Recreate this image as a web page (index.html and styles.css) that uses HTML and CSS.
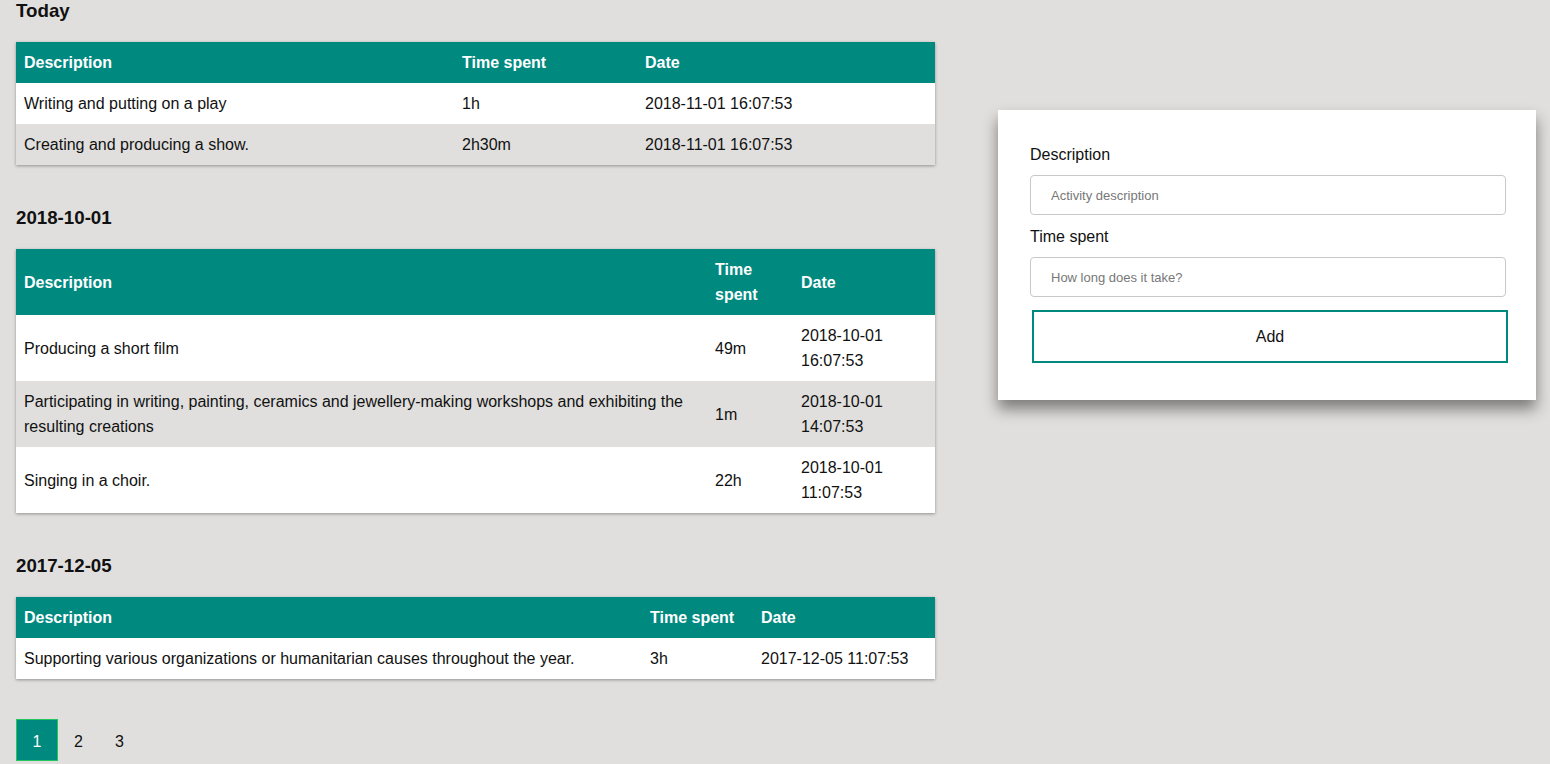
FILE: index.html
```html
<!DOCTYPE html>
<html lang="en">
<head>
<meta charset="utf-8">
<title>Activities</title>
<link rel="stylesheet" href="styles.css">
</head>
<body>
<div class="page">
  <main class="list">
    <section class="group">
      <h3 class="group-title">Today</h3>
      <table class="activities">
        <colgroup><col class="c-a1"><col class="c-b1"><col class="c-c1"></colgroup>
        <thead><tr><th>Description</th><th>Time spent</th><th>Date</th></tr></thead>
        <tbody>
          <tr><td>Writing and putting on a play</td><td>1h</td><td>2018-11-01 16:07:53</td></tr>
          <tr><td>Creating and producing a show.</td><td>2h30m</td><td>2018-11-01 16:07:53</td></tr>
        </tbody>
      </table>
    </section>
    <section class="group">
      <h3 class="group-title">2018-10-01</h3>
      <table class="activities">
        <colgroup><col class="c-a2"><col class="c-b2"><col class="c-c2"></colgroup>
        <thead><tr><th>Description</th><th>Time spent</th><th>Date</th></tr></thead>
        <tbody>
          <tr><td>Producing a short film</td><td>49m</td><td>2018-10-01 16:07:53</td></tr>
          <tr><td>Participating in writing, painting, ceramics and jewellery-making workshops and exhibiting the resulting creations</td><td>1m</td><td>2018-10-01 14:07:53</td></tr>
          <tr><td>Singing in a choir.</td><td>22h</td><td>2018-10-01 11:07:53</td></tr>
        </tbody>
      </table>
    </section>
    <section class="group">
      <h3 class="group-title">2017-12-05</h3>
      <table class="activities">
        <colgroup><col class="c-a3"><col class="c-b3"><col class="c-c3"></colgroup>
        <thead><tr><th>Description</th><th>Time spent</th><th>Date</th></tr></thead>
        <tbody>
          <tr><td>Supporting various organizations or humanitarian causes throughout the year.</td><td>3h</td><td>2017-12-05 11:07:53</td></tr>
        </tbody>
      </table>
    </section>
    <nav class="pager">
      <span class="page-item active">1</span>
      <span class="page-item">2</span>
      <span class="page-item">3</span>
    </nav>
  </main>
  <aside class="card">
    <form class="form">
      <label class="label" for="desc">Description</label>
      <input class="input" id="desc" type="text" placeholder="Activity description">
      <label class="label" for="time">Time spent</label>
      <input class="input" id="time" type="text" placeholder="How long does it take?">
      <button class="add-btn" type="button">Add</button>
    </form>
  </aside>
</div>
</body>
</html>
```

FILE: styles.css
```css
html, body {
  margin: 0;
  padding: 0;
  background: #e0dfdd;
  font-family: "Liberation Sans", Arial, sans-serif;
  color: #111;
}

.page {
  display: flex;
  align-items: flex-start;
  padding: 0 14px 0 16px;
}

.list {
  width: 919px;
  flex: 0 0 919px;
}

.group {
  margin-bottom: 42px;
}

.group-title {
  margin: 0 0 20px;
  font-size: 18.72px;
  line-height: 22px;
  font-weight: bold;
  color: #111;
}

.activities {
  width: 100%;
  table-layout: fixed;
  border-collapse: collapse;
  font-size: 16px;
  line-height: 25px;
  background: #fff;
  box-shadow: 0 1px 3px rgba(0, 0, 0, 0.35);
}

.c-a1 { width: 438px; }
.c-b1 { width: 183px; }
.c-c1 { width: 298px; }
.c-a2 { width: 691px; }
.c-b2 { width: 86px; }
.c-c2 { width: 142px; }
.c-a3 { width: 626px; }
.c-b3 { width: 111px; }
.c-c3 { width: 182px; }

.activities th,
.activities td {
  padding: 8px;
  text-align: left;
  vertical-align: middle;
}

.activities th {
  background: #00897f;
  color: #fff;
  font-weight: bold;
}

.activities tbody tr:nth-child(even) td {
  background: #e0dfdd;
}

.pager {
  display: flex;
  margin-top: -2px;
}

.page-item {
  width: 41px;
  height: 42px;
  box-sizing: border-box;
  display: flex;
  align-items: center;
  justify-content: center;
  padding-top: 3px;
  font-size: 16px;
  color: #111;
}

.page-item.active {
  width: 42px;
  background: #00897f;
  color: #fff;
  border: 1px solid #22c55e;
}

.card {
  margin-left: 63px;
  margin-top: 110px;
  width: 538px;
  flex: 0 0 538px;
  box-sizing: border-box;
  background: #fff;
  padding: 36px 30px 37px 32px;
  box-shadow: 0 9px 14px rgba(0, 0, 0, 0.45);
}

.form {
  display: flex;
  flex-direction: column;
}

.label {
  font-size: 16px;
  line-height: 18px;
  color: #111;
  margin-bottom: 11px;
}

.input {
  height: 40px;
  box-sizing: border-box;
  border: 1px solid #c8c8c8;
  border-radius: 4px;
  padding: 0 20px;
  font-family: "Liberation Sans", Arial, sans-serif;
  font-size: 13px;
  color: #333;
  margin-bottom: 13px;
}

.input::placeholder {
  color: #777;
}

.add-btn {
  margin-left: 2px;
  width: 476px;
  height: 53px;
  box-sizing: border-box;
  background: #fff;
  border: 2px solid #00897f;
  font-family: "Liberation Sans", Arial, sans-serif;
  font-size: 16px;
  color: #111;
}
```
